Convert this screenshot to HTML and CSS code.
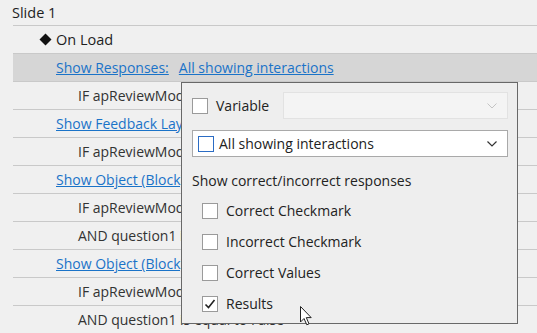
FILE: index.html
```html
<!DOCTYPE html>
<html lang="en">
<head>
    <meta charset="UTF-8">
    <title>Triggers</title>
    <link rel="stylesheet" href="styles.css">
</head>
<body>
    <div class="tree">
        <div class="row slide">Slide 1</div>
        <div class="row event">
            <svg class="diamond" width="13" height="13" viewBox="0 0 13 13"><path d="M6.5 0.5 L12.5 6.5 L6.5 12.5 L0.5 6.5 Z" fill="#111"/></svg>On Load
        </div>
        <div class="row action selected">
            <a class="link">Show Responses:</a><a class="link value">All showing interactions</a>
        </div>
        <div class="row cond">IF apReviewMode is equal to True</div>
        <div class="row action"><a class="link">Show Feedback Layer</a></div>
        <div class="row cond">IF apReviewMode is equal to True</div>
        <div class="row action"><a class="link">Show Object (Block)</a></div>
        <div class="row cond">IF apReviewMode is equal to True</div>
        <div class="row cond">AND question1 is equal to True</div>
        <div class="row action"><a class="link">Show Object (Block)</a></div>
        <div class="row cond">IF apReviewMode is equal to True</div>
        <div class="row cond last">AND question1 is equal to False</div>

        <!-- responses popup -->
        <div class="popup">
            <div class="var-row">
                <label class="check-label"><span class="box"></span>Variable</label>
                <div class="combo disabled">
                    <svg class="chev" width="10" height="6" viewBox="0 0 10 6"><path d="M0.5 0.5 L5 5 L9.5 0.5" fill="none" stroke="#c4c4c4" stroke-width="1"/></svg>
                </div>
            </div>
            <div class="combo main">
                <span class="box blue"></span>
                <span class="combo-text">All showing interactions</span>
                <svg class="chev" width="10" height="6" viewBox="0 0 10 6"><path d="M0.5 0.5 L5 5 L9.5 0.5" fill="none" stroke="#333" stroke-width="1.2"/></svg>
            </div>
            <div class="section">Show correct/incorrect responses</div>
            <div class="options">
                <label class="check-label"><span class="box"></span>Correct Checkmark</label>
                <label class="check-label"><span class="box"></span>Incorrect Checkmark</label>
                <label class="check-label"><span class="box"></span>Correct Values</label>
                <label class="check-label"><span class="box">
                    <svg width="14" height="14" viewBox="0 0 14 14"><path d="M2.5 7.5 L5.5 10.5 L11.5 3" fill="none" stroke="#222" stroke-width="1.6"/></svg>
                </span>Results</label>
            </div>
        </div>

        <svg class="cursor" width="14" height="20" viewBox="0 0 14 20">
            <path d="M0.5 0.5 L0.5 16 L4 12.5 L6.8 18.8 L9 17.8 L6.3 11.6 L11.2 11.6 Z" fill="#fff" stroke="#222" stroke-width="1" stroke-linejoin="miter"/>
        </svg>
    </div>
</body>
</html>
```

FILE: styles.css
```css
body {
    margin: 0;
    background-color: #f0f0f0;
    font-family: "Open Sans", "Noto Sans", sans-serif;
    font-size: 14px;
    color: #1e1e1e;
    overflow: hidden;
}

.tree {
    position: relative;
    height: 333px;
}

.row {
    display: flex;
    align-items: center;
    height: 27px;
    margin-left: 13px;
    border-bottom: 1px solid #c9c9c9;
    white-space: nowrap;
    color: #333;
}

.row.slide {
    height: 25px;
    text-indent: -1px;
    font-size: 14.5px;
    color: #1e1e1e;
}

.row.event {
    padding-left: 26px;
    font-size: 14.5px;
    color: #1e1e1e;
}

.diamond {
    margin-right: 4px;
}

.row.action {
    padding-left: 43px;
}

.row.selected {
    background-color: #d6d6d6;
}

.row.cond {
    padding-left: 65px;
}

.row.last {
    border-bottom: none;
}

.link {
    color: #1a73c8;
    text-decoration: underline;
    cursor: pointer;
}

.link.value {
    margin-left: 10px;
}

.popup {
    position: absolute;
    left: 181px;
    top: 82px;
    width: 337px;
    height: 242px;
    box-sizing: border-box;
    border: 1px solid #686868;
    background-color: #eeeeee;
    padding: 9px 9px 0 10px;
    color: #222;
}

.var-row {
    display: flex;
    align-items: center;
    height: 27px;
}

.check-label {
    display: flex;
    align-items: center;
    gap: 8px;
    white-space: nowrap;
}

.box {
    display: inline-flex;
    align-items: center;
    justify-content: center;
    width: 14px;
    height: 14px;
    border: 1px solid #9a9a9a;
    background-color: #fff;
    flex-shrink: 0;
}

.box.blue {
    border-color: #2b6cc4;
}

.combo {
    display: flex;
    align-items: center;
    height: 27px;
    box-sizing: border-box;
    padding: 0 10px 0 5px;
}

.combo.disabled {
    margin-left: auto;
    width: 225px;
    background-color: #f4f4f4;
    border: 1px solid #e2e2e2;
}

.combo.main {
    margin-top: 11px;
    width: 316px;
    background-color: #fff;
    border: 1px solid #a9a9a9;
    gap: 5px;
}

.combo-text {
    flex: 1;
}

.chev {
    margin-left: auto;
}

.section {
    margin-top: 10px;
    height: 26px;
    display: flex;
    align-items: center;
}

.options {
    display: flex;
    flex-direction: column;
    padding-left: 10px;
    margin-top: 2px;
}

.options .check-label {
    height: 31px;
}

.cursor {
    position: absolute;
    left: 300px;
    top: 306px;
}
```
